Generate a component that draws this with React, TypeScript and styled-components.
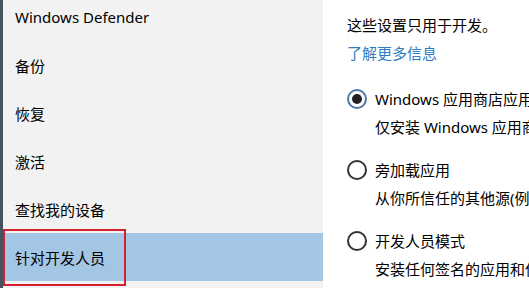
import React, { useState } from 'react'
import styled, { createGlobalStyle } from 'styled-components'

const GlobalStyle = createGlobalStyle`
  html, body {
    margin: 0;
    padding: 0;
    overflow: hidden;
  }
  body {
    font-family: "Noto Sans", "Noto Sans CJK SC", sans-serif;
    color: #000;
  }
`

const navItems = ['Windows Defender', '备份', '恢复', '激活', '查找我的设备', '针对开发人员']

const options = [
  { title: 'Windows 应用商店应用', desc: '仅安装 Windows 应用商店中的应用。' },
  { title: '旁加载应用', desc: '从你所信任的其他源(例如你的工作区)安装应用。' },
  { title: '开发人员模式', desc: '安装任何签名的应用和使用高级开发功能。' }
]

const Window = styled.div`
  display: flex;
  width: 529px;
  height: 288px;
  overflow: hidden;
  background: #fff;
`

const Sidebar = styled.nav`
  width: 320px;
  flex-shrink: 0;
  background: #f2f2f2;
  border-left: 3px solid #46525c;
`

const NavList = styled.ul`
  list-style: none;
  margin: -7px 0 0;
  padding: 0;
`

const NavRow = styled.li<{ $selected?: boolean }>`
  position: relative;
  display: flex;
  align-items: center;
  height: 48px;
  padding-left: 12px;
  font-size: 15px;
  color: #000;
  background: ${(p) => (p.$selected ? '#a4c6e5' : 'transparent')};
`

const Highlight = styled.span`
  position: absolute;
  left: 0;
  top: -4px;
  width: 123px;
  height: 57px;
  box-sizing: border-box;
  border: 2px solid #d2202e;
  pointer-events: none;
`

const Content = styled.main`
  flex: 1;
  padding: 15px 0 0 24px;
  white-space: nowrap;
  overflow: hidden;
  font-size: 15px;
  line-height: 20px;
`

const Intro = styled.p`
  margin: 0;
`

const Link = styled.a`
  display: block;
  margin-top: 8px;
  color: #2f7dc0;
  text-decoration: none;
`

const OptionGroup = styled.div`
  margin-top: 26px;
`

const Option = styled.label`
  display: block;
  margin-bottom: 23px;
  cursor: pointer;
`

const OptionRow = styled.div`
  display: flex;
  align-items: center;
  height: 20px;
  gap: 8px;
`

const Radio = styled.span<{ $checked?: boolean }>`
  display: flex;
  align-items: center;
  justify-content: center;
  width: 20px;
  height: 20px;
  box-sizing: border-box;
  border-radius: 50%;
  border: 2px solid ${(p) => (p.$checked ? '#4f78a6' : '#333')};
  flex-shrink: 0;

  &::after {
    content: '';
    display: ${(p) => (p.$checked ? 'block' : 'none')};
    width: 10px;
    height: 10px;
    border-radius: 50%;
    background: #222;
  }
`

const Desc = styled.div`
  margin-top: 8px;
  padding-left: 28px;
`

export default function App() {
  const [mode, setMode] = useState(0)

  return (
    <>
      <GlobalStyle />
      <Window>
        <Sidebar>
          <NavList>
            {navItems.map((item, i) => {
              const selected = i === navItems.length - 1
              return (
                <NavRow key={item} $selected={selected}>
                  {item}
                  {selected && <Highlight />}
                </NavRow>
              )
            })}
          </NavList>
        </Sidebar>
        <Content>
          <Intro>这些设置只用于开发。</Intro>
          <Link href="#">了解更多信息</Link>
          <OptionGroup>
            {options.map((o, i) => (
              <Option key={o.title} onClick={() => setMode(i)}>
                <OptionRow>
                  <Radio $checked={mode === i} />
                  {o.title}
                </OptionRow>
                <Desc>{o.desc}</Desc>
              </Option>
            ))}
          </OptionGroup>
        </Content>
      </Window>
    </>
  )
}
